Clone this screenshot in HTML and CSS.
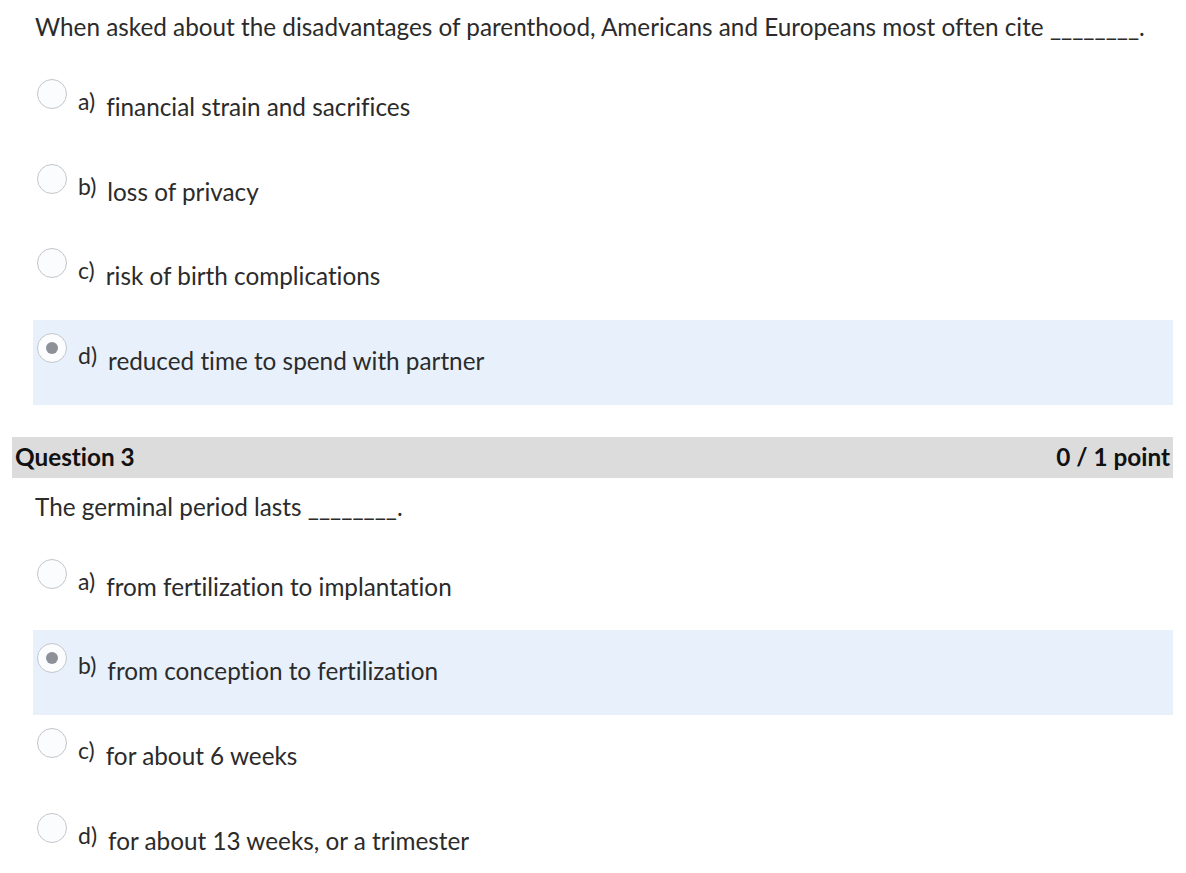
FILE: index.html
```html
<!DOCTYPE html>
<html lang="en">
<head>
<meta charset="utf-8">
<title>Quiz</title>
<link rel="stylesheet" href="styles.css">
</head>
<body>
<main class="quiz">
  <section class="question">
    <p class="prompt">When asked about the disadvantages of parenthood, Americans and Europeans most often cite <span class="blank">________</span>.</p>
    <ul class="options">
      <li class="option"><span class="radio"></span><span class="letter">a)</span><span class="answer">financial strain and sacrifices</span></li>
      <li class="option"><span class="radio"></span><span class="letter">b)</span><span class="answer">loss of privacy</span></li>
      <li class="option"><span class="radio"></span><span class="letter">c)</span><span class="answer">risk of birth complications</span></li>
      <li class="option selected"><span class="radio"></span><span class="letter">d)</span><span class="answer">reduced time to spend with partner</span></li>
    </ul>
  </section>
  <section class="question">
    <header class="q-header"><span class="q-title">Question 3</span><span class="q-score">0 / 1 point</span></header>
    <p class="prompt">The germinal period lasts <span class="blank">________</span>.</p>
    <ul class="options">
      <li class="option"><span class="radio"></span><span class="letter">a)</span><span class="answer">from fertilization to implantation</span></li>
      <li class="option selected"><span class="radio"></span><span class="letter">b)</span><span class="answer">from conception to fertilization</span></li>
      <li class="option"><span class="radio"></span><span class="letter">c)</span><span class="answer">for about 6 weeks</span></li>
      <li class="option"><span class="radio"></span><span class="letter">d)</span><span class="answer">for about 13 weeks, or a trimester</span></li>
    </ul>
  </section>
</main>
</body>
</html>
```
FILE: styles.css
```css
html, body {
  margin: 0;
  padding: 0;
  background: #ffffff;
}
body {
  font-family: Lato, "Open Sans", sans-serif;
  font-variant-ligatures: none;
  color: #2b2b2b;
}
.quiz {
  padding: 0 13px 0 12px;
}
.prompt {
  margin: 12px 0 24px 23px;
  font-size: 24.3px;
  line-height: 30px;
  color: #2b2b2b;
}
.options {
  list-style: none;
  margin: 0 0 0 21px;
  padding: 0;
}
.option {
  display: flex;
  align-items: flex-start;
  height: 84.67px;
  box-sizing: border-box;
  padding: 13px 0 0 4px;
}
.option.selected {
  background: #e8f1fb;
}
.radio {
  flex: none;
  width: 30px;
  height: 30px;
  box-sizing: border-box;
  border: 1px solid #c3c6ca;
  border-radius: 50%;
  background: #fbfcfd;
  position: relative;
}
.option.selected .radio::after {
  content: "";
  position: absolute;
  left: 8px;
  top: 8px;
  width: 12px;
  height: 12px;
  border-radius: 50%;
  background: #8d9197;
}
.letter {
  margin: 8px 0 0 11px;
  font-size: 23px;
  line-height: 28px;
  color: #2b2b2b;
}
.answer {
  margin: 14px 0 0 11px;
  font-size: 24.3px;
  line-height: 28px;
  color: #2b2b2b;
}
.question + .question {
  margin-top: 32px;
}
.q-header {
  display: flex;
  justify-content: space-between;
  align-items: center;
  height: 41px;
  box-sizing: border-box;
  padding: 0 3px 2px;
  background: #dcdcdc;
  font-weight: 700;
  font-size: 24.3px;
  color: #111;
}
.question + .question .prompt {
  margin-top: 14px;
  margin-bottom: 24px;
}
```
